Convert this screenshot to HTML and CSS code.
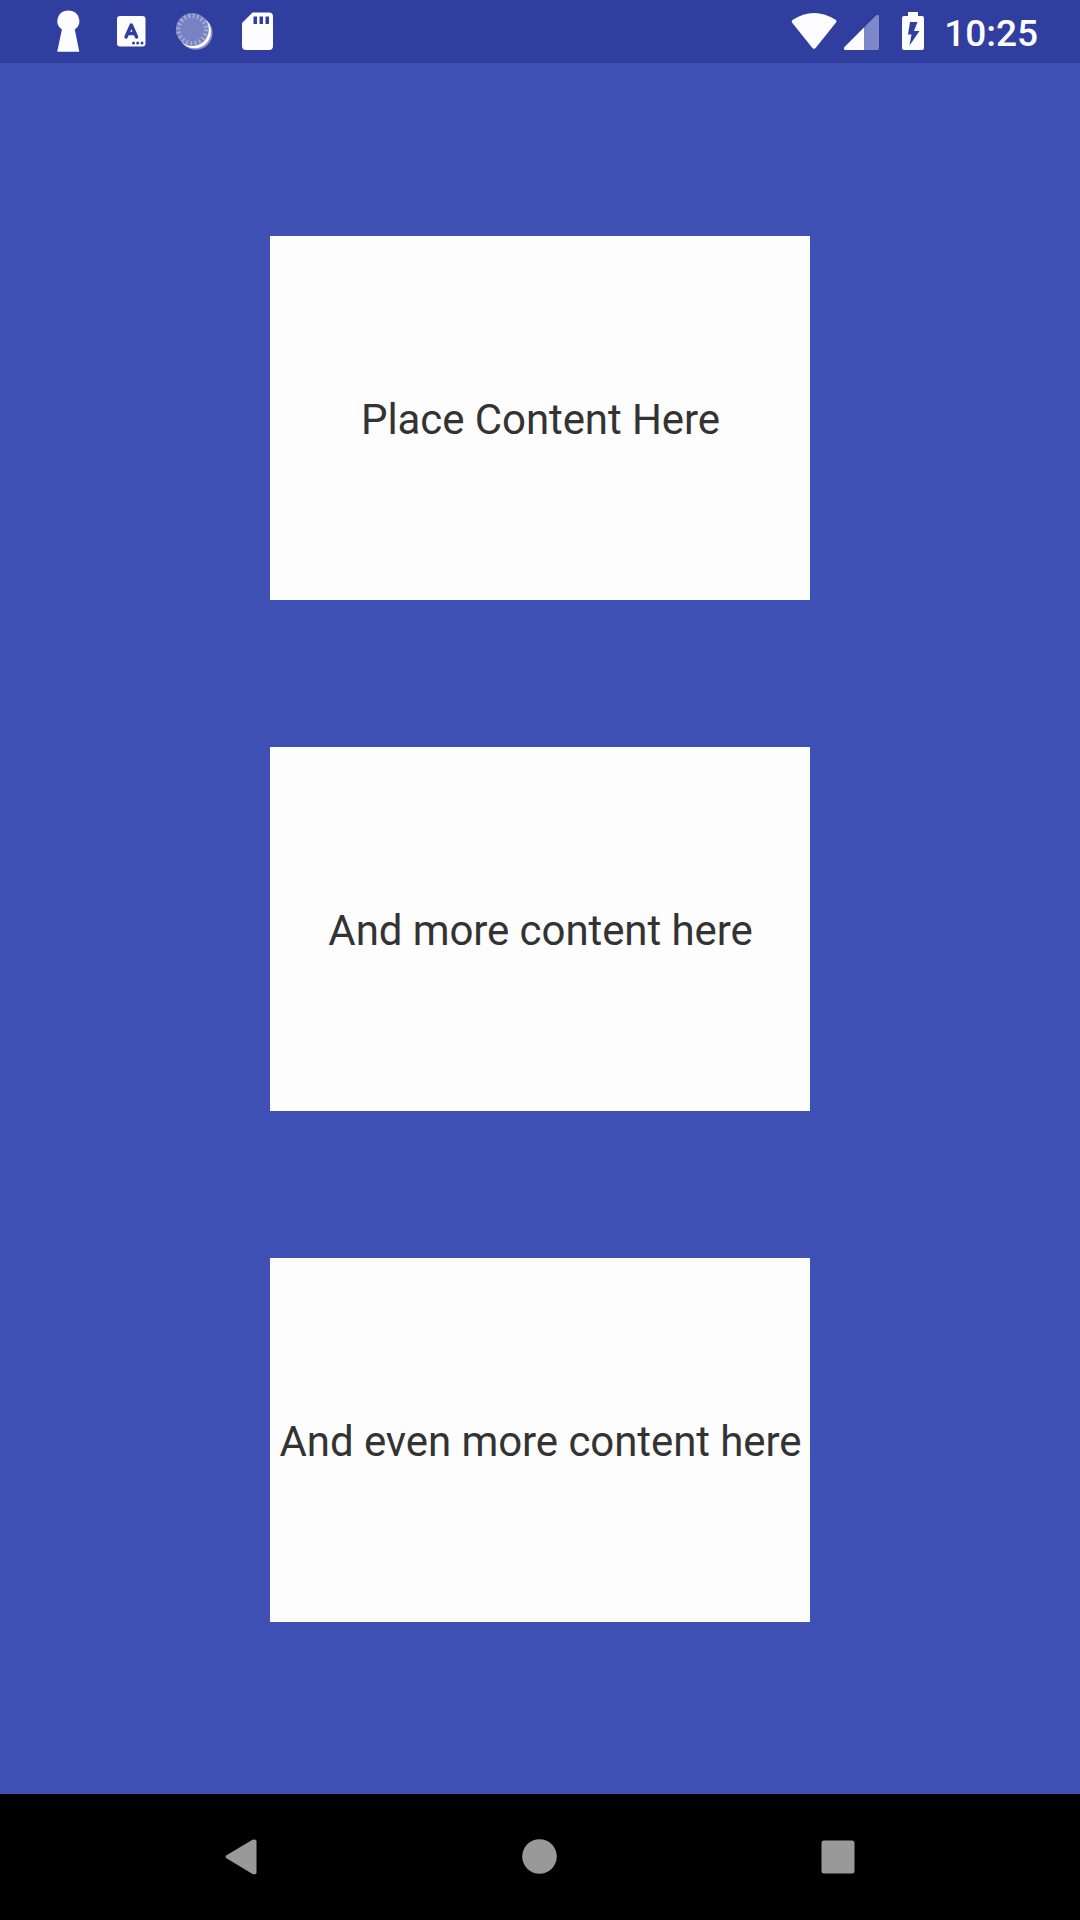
FILE: index.html
```html
<!DOCTYPE html>
<html lang="en">
<head>
<meta charset="utf-8">
<title>Content cards</title>
<link rel="stylesheet" href="styles.css">
</head>
<body>
<div class="screen">
  <header class="status">
    <svg class="status-icons" width="240" height="63" viewBox="40 0 240 63">
      <path fill="#fdfdff" d="M68.300 10.500a11 10.500 0 0 1 6.500 19l4.500 22.200H57.200l4.700-22.200a11 10.500 0 0 1 6.400-19z"/>
      <rect x="117" y="16" width="28.500" height="30.500" rx="3" fill="#fdfdff"/>
      <path d="M126 37l5.300-12 5.300 12M128 33.500h6.800" fill="none" stroke="#303f9f" stroke-width="3.400" stroke-linejoin="round" stroke-linecap="round"/>
      <g fill="#303f9f"><circle cx="133.500" cy="43" r="1.500"/><circle cx="137.700" cy="43" r="1.500"/><circle cx="142" cy="43" r="1.500"/></g>
      <circle cx="195.800" cy="33" r="16.800" fill="#8790cc"/>
      <circle cx="194.500" cy="31.800" r="16.500" fill="#fdfdff"/>
      <circle cx="192.300" cy="29.500" r="16.500" fill="#7782c3"/>
      <circle cx="192.300" cy="29.500" r="13.800" fill="none" stroke="#a3abd9" stroke-width="4.500" stroke-dasharray="1.800 2.535"/>
      <path fill="#fdfdff" fill-rule="evenodd" d="M252.500 12.500H269a4 4 0 0 1 4 4V46a4 4 0 0 1-4 4h-23a4 4 0 0 1-4-4V23zM253.500 16.500v7.500h3.500v-7.500zM259.500 16.500v7.500h3.500v-7.500zM265.500 16.500v7.500h3.500v-7.500z"/>
    </svg>
    <svg class="status-icons" width="150" height="63" viewBox="780 0 150 63">
      <path fill="#fdfdff" d="M792.500 20Q814 6 836 20q1 1 0 2.500L816 47.500q-2 2.500-4 0L792 22.500q-1-1.500.500-2.500z"/>
      <path fill="#7d88c7" d="M864 27.500l12-12q3-2 3 1V48q0 2-2 2h-13z"/>
      <path fill="#fdfdff" d="M864 27.500V50h-19q-2-1-.500-3z"/>
      <path fill="#fdfdff" fill-rule="evenodd" d="M908 12h10v4h4q2 0 2 2v30q0 2-2 2h-18q-2 0-2-2V18q0-2 2-2h4zM910 22L908 34.500h3.500L909.500 45.500 919.500 31H914l3.500-9z"/>
    </svg>
    <time class="clock">10:25</time>
  </header>
  <main class="cards">
    <section class="card">Place Content Here</section>
    <section class="card">And more content here</section>
    <section class="card">And even more content here</section>
  </main>
  <nav class="navbar">
    <svg width="36" height="38" viewBox="0 0 36 38"><path fill="#999" d="M2.500 20.200q-2-1.500 0-3L28.500 1.700q4-1 4 1.500v31.500q0 2.300-4 1.300z"/></svg>
    <svg width="36" height="38" viewBox="0 0 36 38"><circle cx="17.500" cy="18.500" r="17.300" fill="#999"/></svg>
    <svg width="36" height="38" viewBox="0 0 36 38"><rect x="1.500" y="2.500" width="33" height="33" rx="2.500" fill="#999"/></svg>
  </nav>
</div>
</body>
</html>
```
FILE: styles.css
```css
body {
  margin: 0;
  font-family: Roboto, sans-serif;
}

.screen {
  display: flex;
  flex-direction: column;
  width: 1080px;
  height: 1920px;
  background: #3f51b5;
}

.status {
  display: flex;
  align-items: center;
  box-sizing: border-box;
  height: 63px;
  padding: 0 42px 0 40px;
  background: #303f9f;
}

.status-icons {
  flex: none;
}

.status-icons + .status-icons {
  margin-left: auto;
}

.clock {
  width: 108px;
  padding-top: 4px;
  box-sizing: border-box;
  text-align: right;
  color: #fdfdff;
  font-size: 37px;
  font-weight: 500;
  line-height: 44px;
  white-space: nowrap;
}

.cards {
  display: flex;
  flex: 1;
  flex-direction: column;
  align-items: center;
  justify-content: center;
  gap: 147px;
}

.card {
  display: flex;
  align-items: center;
  justify-content: center;
  box-sizing: border-box;
  width: 540px;
  height: 364px;
  padding: 4px 0 0 1px;
  background: #fdfdfd;
  color: #333;
  font-size: 42px;
  letter-spacing: -0.08px;
  line-height: 49px;
  white-space: nowrap;
}

.navbar {
  display: flex;
  align-items: center;
  justify-content: space-between;
  box-sizing: border-box;
  height: 126px;
  padding: 0 224px;
  background: #000;
}
```
